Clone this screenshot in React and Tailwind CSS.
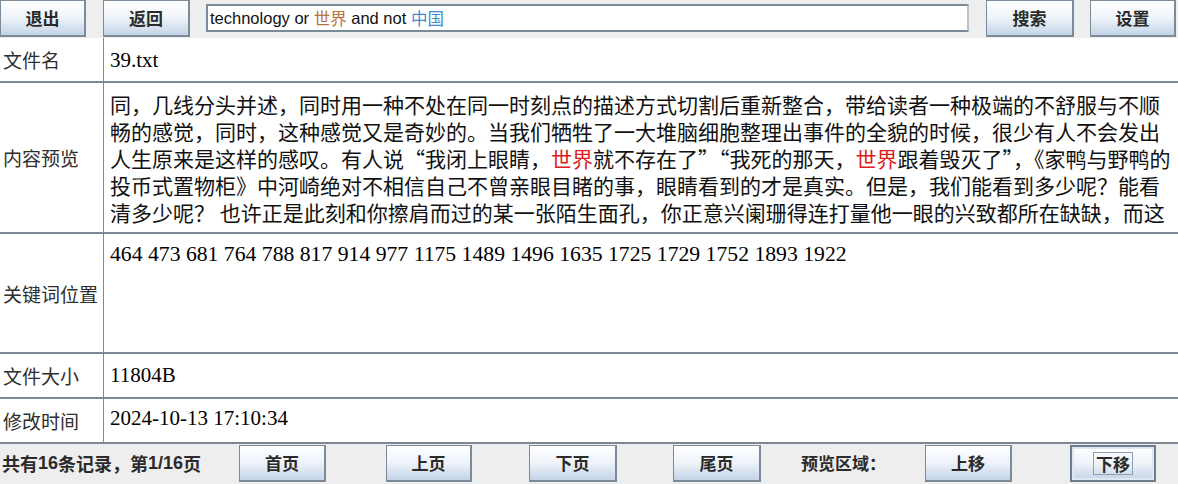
import React from "react";

const CJK = { fontFamily: '"Noto Sans CJK SC", "Noto Sans", sans-serif' };
const SERIF = { fontFamily: '"Liberation Serif", "Noto Sans CJK SC", serif' };
const SANS = { fontFamily: '"Liberation Sans", "Noto Sans CJK SC", sans-serif' };

function Btn({ children, className = "", focused = false }) {
  return (
    <div
      className={
        "flex items-center justify-center h-[37px] shrink-0 bg-gradient-to-b from-[#ffffff] via-[#eef3f9] to-[#c3d4e6] text-[17px] font-semibold text-[#2b2b2b] " +
        (focused
          ? "border-2 border-[#6d7d8e] shadow-[inset_0_0_0_2px_#dfe8f2] "
          : "border border-[#7b8a99] border-r-2 border-b-2 ") +
        className
      }
      style={CJK}
    >
      {focused ? (
        <span className="border border-[#8d9cb0] px-[2px] leading-[21px]">{children}</span>
      ) : (
        children
      )}
    </div>
  );
}

function Label({ children }) {
  return (
    <div
      className="w-[104px] shrink-0 border-r border-[#7d8894] flex items-center pl-[3px] pt-[2px] text-[19px] text-[#2e2e2e]"
      style={CJK}
    >
      {children}
    </div>
  );
}

const lines = [
  ["同，几线分头并述，同时用一种不处在同一时刻点的描述方式切割后重新整合，带给读者一种极端的不舒服与不顺"],
  ["畅的感觉，同时，这种感觉又是奇妙的。当我们牺牲了一大堆脑细胞整理出事件的全貌的时候，很少有人不会发出"],
  [
    "人生原来是这样的感叹。有人说“我闭上眼睛，",
    { red: "世界" },
    "就不存在了”“我死的那天，",
    { red: "世界" },
    "跟着毁灭了”，《家鸭与野鸭的",
  ],
  ["投币式置物柜》中河崎绝对不相信自己不曾亲眼目睹的事，眼睛看到的才是真实。但是，我们能看到多少呢？能看"],
  ["清多少呢？ 也许正是此刻和你擦肩而过的某一张陌生面孔，你正意兴阑珊得连打量他一眼的兴致都所在缺缺，而这"],
];

export default function App() {
  return (
    <div className="w-[1178px] h-[484px] bg-white overflow-hidden flex flex-col">
      {/* top bar */}
      <div className="h-[38px] shrink-0 bg-[#eeeeee] flex items-start">
        <Btn className="w-[86px]">退出</Btn>
        <Btn className="w-[87px] ml-[17px]">返回</Btn>
        <div
          className="ml-[16px] mt-[4px] w-[763px] h-[28px] bg-white border-2 border-[#7b8a99] border-r-[#b9c2cc] flex items-center pl-[2px] text-[16.5px] text-[#111]"
          style={SANS}
        >
          <span className="whitespace-pre">technology or </span>
          <span className="text-[#b7743c]" style={CJK}>世界</span>
          <span className="whitespace-pre"> and not </span>
          <span className="text-[#3f8dcc]" style={CJK}>中国</span>
        </div>
        <Btn className="w-[88px] ml-[17px]">搜索</Btn>
        <Btn className="w-[86px] ml-[16px]">设置</Btn>
      </div>

      {/* table */}
      <div className="flex h-[45px] shrink-0 border-b-2 border-[#7d8894]">
        <Label>文件名</Label>
        <div className="flex items-center pl-[6px] pt-[2px] text-[21px] text-black" style={SERIF}>
          39.txt
        </div>
      </div>

      <div className="flex h-[151px] shrink-0 border-b-2 border-[#7d8894]">
        <Label>内容预览</Label>
        <div className="pl-[6px] pt-[8px] flex flex-col text-[21px] text-[#111]" style={CJK}>
          {lines.map((parts, i) => (
            <div key={i} className="whitespace-pre h-[27px] leading-[27px]">
              {parts.map((p, j) =>
                typeof p === "string" ? (
                  <span key={j}>{p}</span>
                ) : (
                  <span key={j} className="text-[#e01b1b]">{p.red}</span>
                )
              )}
            </div>
          ))}
        </div>
      </div>

      <div className="flex h-[120px] shrink-0 border-b-2 border-[#7d8894]">
        <Label>关键词位置</Label>
        <div className="pl-[6px] pt-[7px] text-[21.7px] leading-[27px] text-black" style={SERIF}>
          464 473 681 764 788 817 914 977 1175 1489 1496 1635 1725 1729 1752 1893 1922
        </div>
      </div>

      <div className="flex h-[45px] shrink-0 border-b-2 border-[#7d8894]">
        <Label>文件大小</Label>
        <div className="flex items-center pl-[6px] text-[21px] text-black" style={SERIF}>
          11804B
        </div>
      </div>

      <div className="flex h-[45px] shrink-0 border-b-2 border-[#7d8894]">
        <Label>修改时间</Label>
        <div className="flex items-center pl-[6px] pb-[3px] text-[21px] text-black" style={SERIF}>
          2024-10-13 17:10:34
        </div>
      </div>

      {/* bottom bar */}
      <div className="flex-1 bg-[#eeeeee] flex items-start relative">
        <div
          className="w-[239px] shrink-0 pl-[2px] h-[40px] flex items-center pb-[2px] text-[18px] font-bold text-[#2b2b2b] whitespace-nowrap"
          style={CJK}
        >
          共有<span style={SANS}>16</span>条记录，第<span style={SANS}>1/16</span>页
        </div>
        <Btn className="w-[87px] mt-[1px]">首页</Btn>
        <Btn className="w-[86px] ml-[60px] mt-[1px]">上页</Btn>
        <Btn className="w-[88px] ml-[57px] mt-[1px]">下页</Btn>
        <Btn className="w-[88px] ml-[56px] mt-[1px]">尾页</Btn>
        <div
          className="w-[124px] shrink-0 ml-[40px] h-[40px] flex items-center pb-[2px] text-[17px] font-bold text-[#2b2b2b]"
          style={CJK}
        >
          预览区域：
        </div>
        <Btn className="w-[87px] mt-[1px]">上移</Btn>
        <Btn className="w-[86px] ml-[58px] mt-[1px]" focused>
          下移
        </Btn>
      </div>
    </div>
  );
}
